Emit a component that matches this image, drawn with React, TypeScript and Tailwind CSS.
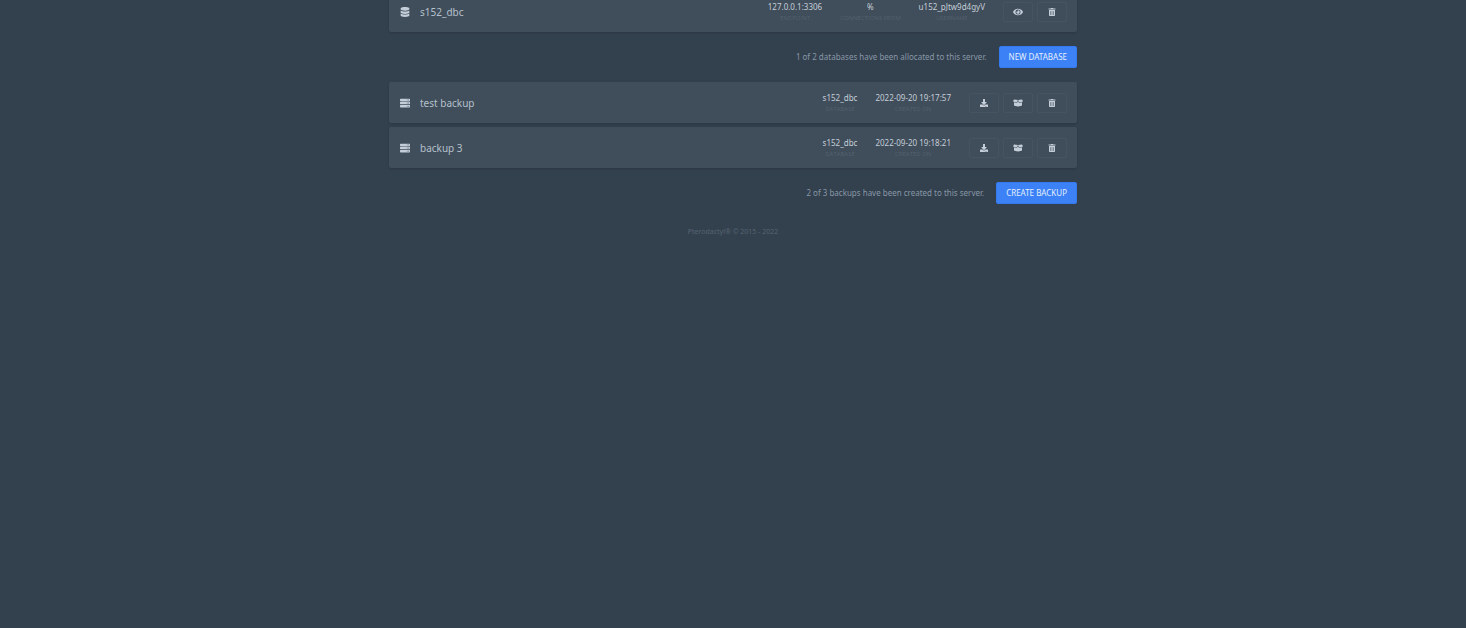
import React from 'react';
import { FaBoxOpen, FaDatabase, FaDownload, FaEye, FaServer, FaTrashAlt } from 'react-icons/fa';
import type { IconType } from 'react-icons';

interface Detail {
  label: string;
  value: string;
}

interface Action {
  label: string;
  icon: IconType;
  size: number;
}

interface RowProps {
  icon: IconType;
  name: string;
  details: Detail[];
  actions: Action[];
}

const databases = [
  {
    name: 's152_dbc',
    details: [
      { label: 'Endpoint', value: '127.0.0.1:3306' },
      { label: 'Connections from', value: '%' },
      { label: 'Username', value: 'u152_pJtw9d4gyV' },
    ],
  },
];

const backups = [
  {
    name: 'test backup',
    details: [
      { label: 'Database', value: 's152_dbc' },
      { label: 'Created on', value: '2022-09-20 19:17:57' },
    ],
  },
  {
    name: 'backup 3',
    details: [
      { label: 'Database', value: 's152_dbc' },
      { label: 'Created on', value: '2022-09-20 19:18:21' },
    ],
  },
];

const databaseActions: Action[] = [
  { label: 'View', icon: FaEye, size: 10 },
  { label: 'Delete', icon: FaTrashAlt, size: 8 },
];

const backupActions: Action[] = [
  { label: 'Download', icon: FaDownload, size: 8 },
  { label: 'Restore', icon: FaBoxOpen, size: 10 },
  { label: 'Delete', icon: FaTrashAlt, size: 8 },
];

function Row({ icon: Icon, name, details, actions }: RowProps) {
  return (
    <div className="flex items-center rounded-xs bg-[#404d5a] py-2 pr-2.5 pl-[11px] shadow-sm">
      <Icon size={10} className="shrink-0 text-[#c3ced9]" />
      <p className="ml-2.5 flex-1 text-[10px] leading-4 text-[#b4c0cc]">{name}</p>
      <dl className="mr-[18px] flex gap-[18px] pt-0.5 text-center">
        {details.map(detail => (
          <div key={detail.label} className="flex flex-col-reverse">
            <dt className="font-['Open_Sans',sans-serif] text-[6px] leading-[11px] text-[#53616f] uppercase">
              {detail.label}
            </dt>
            <dd className="text-[8px] leading-3 text-[#c3ced9]">{detail.value}</dd>
          </div>
        ))}
      </dl>
      <div className="flex gap-1">
        {actions.map(({ label, icon: ActionIcon, size }) => (
          <button
            key={label}
            type="button"
            aria-label={`${label} ${name}`}
            className="flex h-5 w-[30px] items-center justify-center rounded-xs border border-[#465461] text-[#c3ced9]"
          >
            <ActionIcon size={size} />
          </button>
        ))}
      </div>
    </div>
  );
}

function SectionFooter({ text, action }: { text: string; action: string }) {
  return (
    <div className="my-3.5 flex items-center justify-end gap-3">
      <p className="text-[8px] leading-3 text-[#8797a7]">{text}</p>
      <button
        type="button"
        className="rounded-xs border border-[#3579ee] bg-[#3c82f6] px-[9px] text-[8px] leading-5 text-[#e3eefc] uppercase"
      >
        {action}
      </button>
    </div>
  );
}

export default function App() {
  return (
    <div className="min-h-screen overflow-hidden bg-[#33404d] font-['Noto_Sans',sans-serif]">
      <main className="mx-auto -mt-[9px] max-w-[688px]">
        {databases.map(database => (
          <Row key={database.name} icon={FaDatabase} actions={databaseActions} {...database} />
        ))}
        <SectionFooter text="1 of 2 databases have been allocated to this server." action="New Database" />

        <div className="space-y-1">
          {backups.map(backup => (
            <Row key={backup.name} icon={FaServer} actions={backupActions} {...backup} />
          ))}
        </div>
        <SectionFooter text="2 of 3 backups have been created to this server." action="Create Backup" />

        <footer className="mt-5 text-center text-[7px] leading-4 text-[#566473]">
          Pterodactyl® © 2015 - 2022
        </footer>
      </main>
    </div>
  );
}
